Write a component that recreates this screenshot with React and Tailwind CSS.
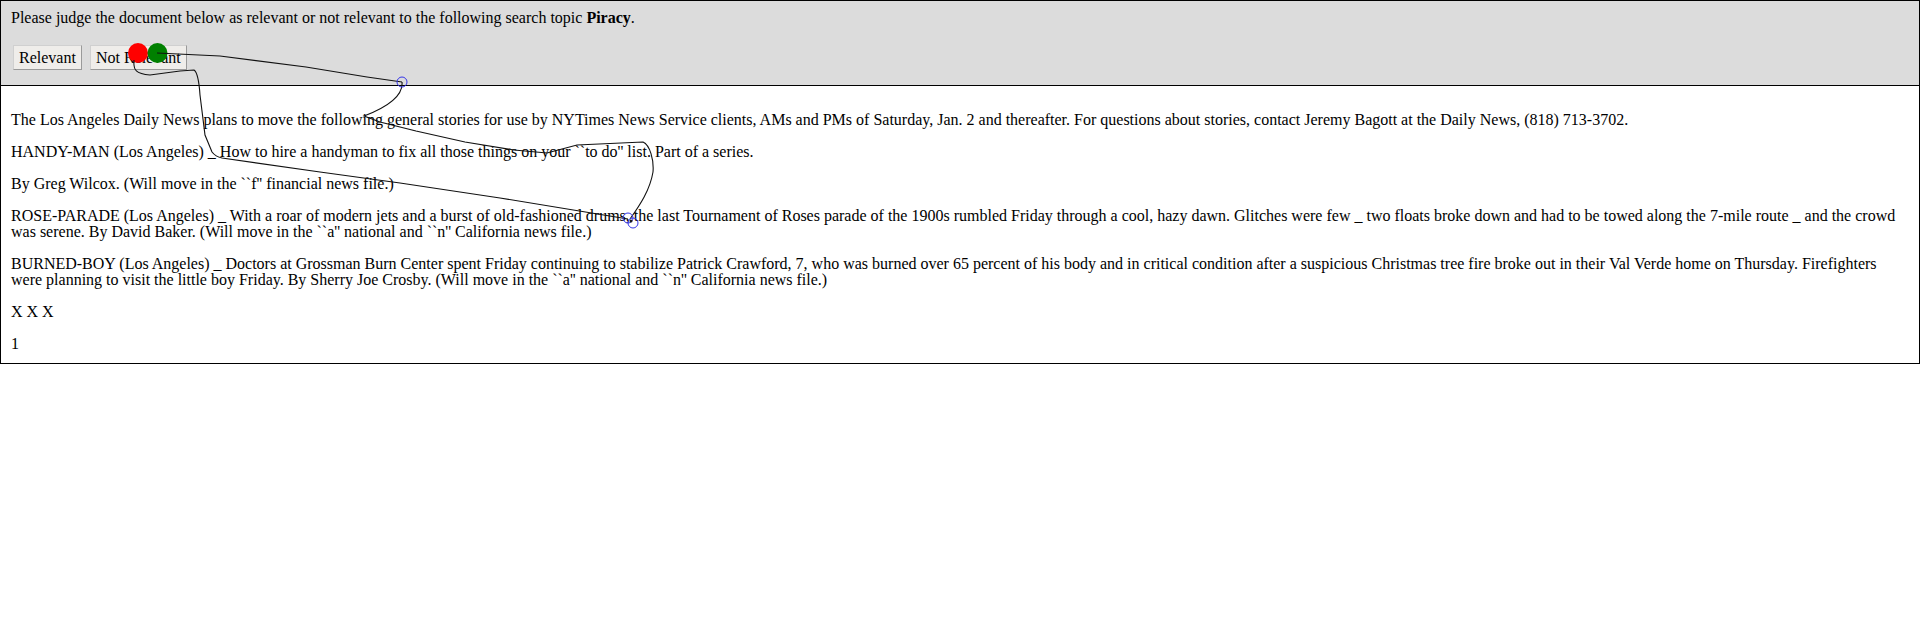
import React from 'react'

const paragraphs = [
  'The Los Angeles Daily News plans to move the following general stories for use by NYTimes News Service clients, AMs and PMs of Saturday, Jan. 2 and thereafter. For questions about stories, contact Jeremy Bagott at the Daily News, (818) 713-3702.',
  'HANDY-MAN (Los Angeles) _ How to hire a handyman to fix all those things on your ``to do\'\' list. Part of a series.',
  'By Greg Wilcox. (Will move in the ``f\'\' financial news file.)',
  'ROSE-PARADE (Los Angeles) _ With a roar of modern jets and a burst of old-fashioned drums, the last Tournament of Roses parade of the 1900s rumbled Friday through a cool, hazy dawn. Glitches were few _ two floats broke down and had to be towed along the 7-mile route _ and the crowd was serene. By David Baker. (Will move in the ``a\'\' national and ``n\'\' California news file.)',
  'BURNED-BOY (Los Angeles) _ Doctors at Grossman Burn Center spent Friday continuing to stabilize Patrick Crawford, 7, who was burned over 65 percent of his body and in critical condition after a suspicious Christmas tree fire broke out in their Val Verde home on Thursday. Firefighters were planning to visit the little boy Friday. By Sherry Joe Crosby. (Will move in the ``a\'\' national and ``n\'\' California news file.)',
  'X X X',
  '1',
]

// mouse trail drawn over the page
function Trail() {
  return (
    <svg
      className="absolute left-0 top-0 pointer-events-none"
      width="1920"
      height="635"
      viewBox="0 0 1920 635"
    >
      <circle cx="138" cy="53" r="10" fill="#ff0000" />
      <circle cx="157.5" cy="53" r="10" fill="#008000" />
      <g fill="none" stroke="#111" strokeWidth="1.1">
        <polyline points="157,53 220,56 306,67 367,77 402,82" />
        <path d="M402,82 C403,92 395,104 364,116 L380,122 L416,131 L465,142 L514,150 L547,153 L577,145 L643,142 C650,145 654,160 653,172 C650,190 640,205 630,219" />
        <path d="M134,60 C133,70 136,74 150,75 L180,71 L194,70 C197,72 199,80 200,95 L205,135 L212,152 C215,156 217,157 222,158 L320,172 L400,183 L500,198 L628,219" />
      </g>
      <g fill="none" stroke="#3535e8" strokeWidth="1">
        <circle cx="402" cy="82" r="5" />
        <circle cx="628" cy="218" r="5" />
        <circle cx="633" cy="223" r="5" />
      </g>
      <circle cx="631" cy="221" r="1.5" fill="#1a1a1a" />
    </svg>
  )
}

export default function App() {
  return (
    <div className="relative min-h-[635px] bg-white font-['Liberation_Serif',serif] text-[16px] leading-[16px] text-black">
      <div className="border border-black">
        {/* Header */}
        <div className="bg-[#dcdcdc] border-b border-black px-[10px] pt-[9px] pb-[15px]">
          <p>
            Please judge the document below as relevant or not relevant to the following search topic{' '}
            <b>Piracy</b>.
          </p>
          <div className="mt-[19px] flex gap-[8px] pl-[2px]">
            <button className="h-[25px] px-[5px] bg-[#efedea] border border-[#9a9a9a] border-t-[#d0d0d0] border-l-[#d0d0d0]">
              Relevant
            </button>
            <button className="h-[25px] px-[5px] bg-[#efedea] border border-[#9a9a9a] border-t-[#d0d0d0] border-l-[#d0d0d0]">
              Not Relevant
            </button>
          </div>
        </div>

        {/* Document */}
        <div className="px-[10px] pt-[26px] pb-[11px] flex flex-col gap-4">
          {paragraphs.map((p, i) => (
            <p key={i}>{p}</p>
          ))}
        </div>
      </div>
      <Trail />
    </div>
  )
}
